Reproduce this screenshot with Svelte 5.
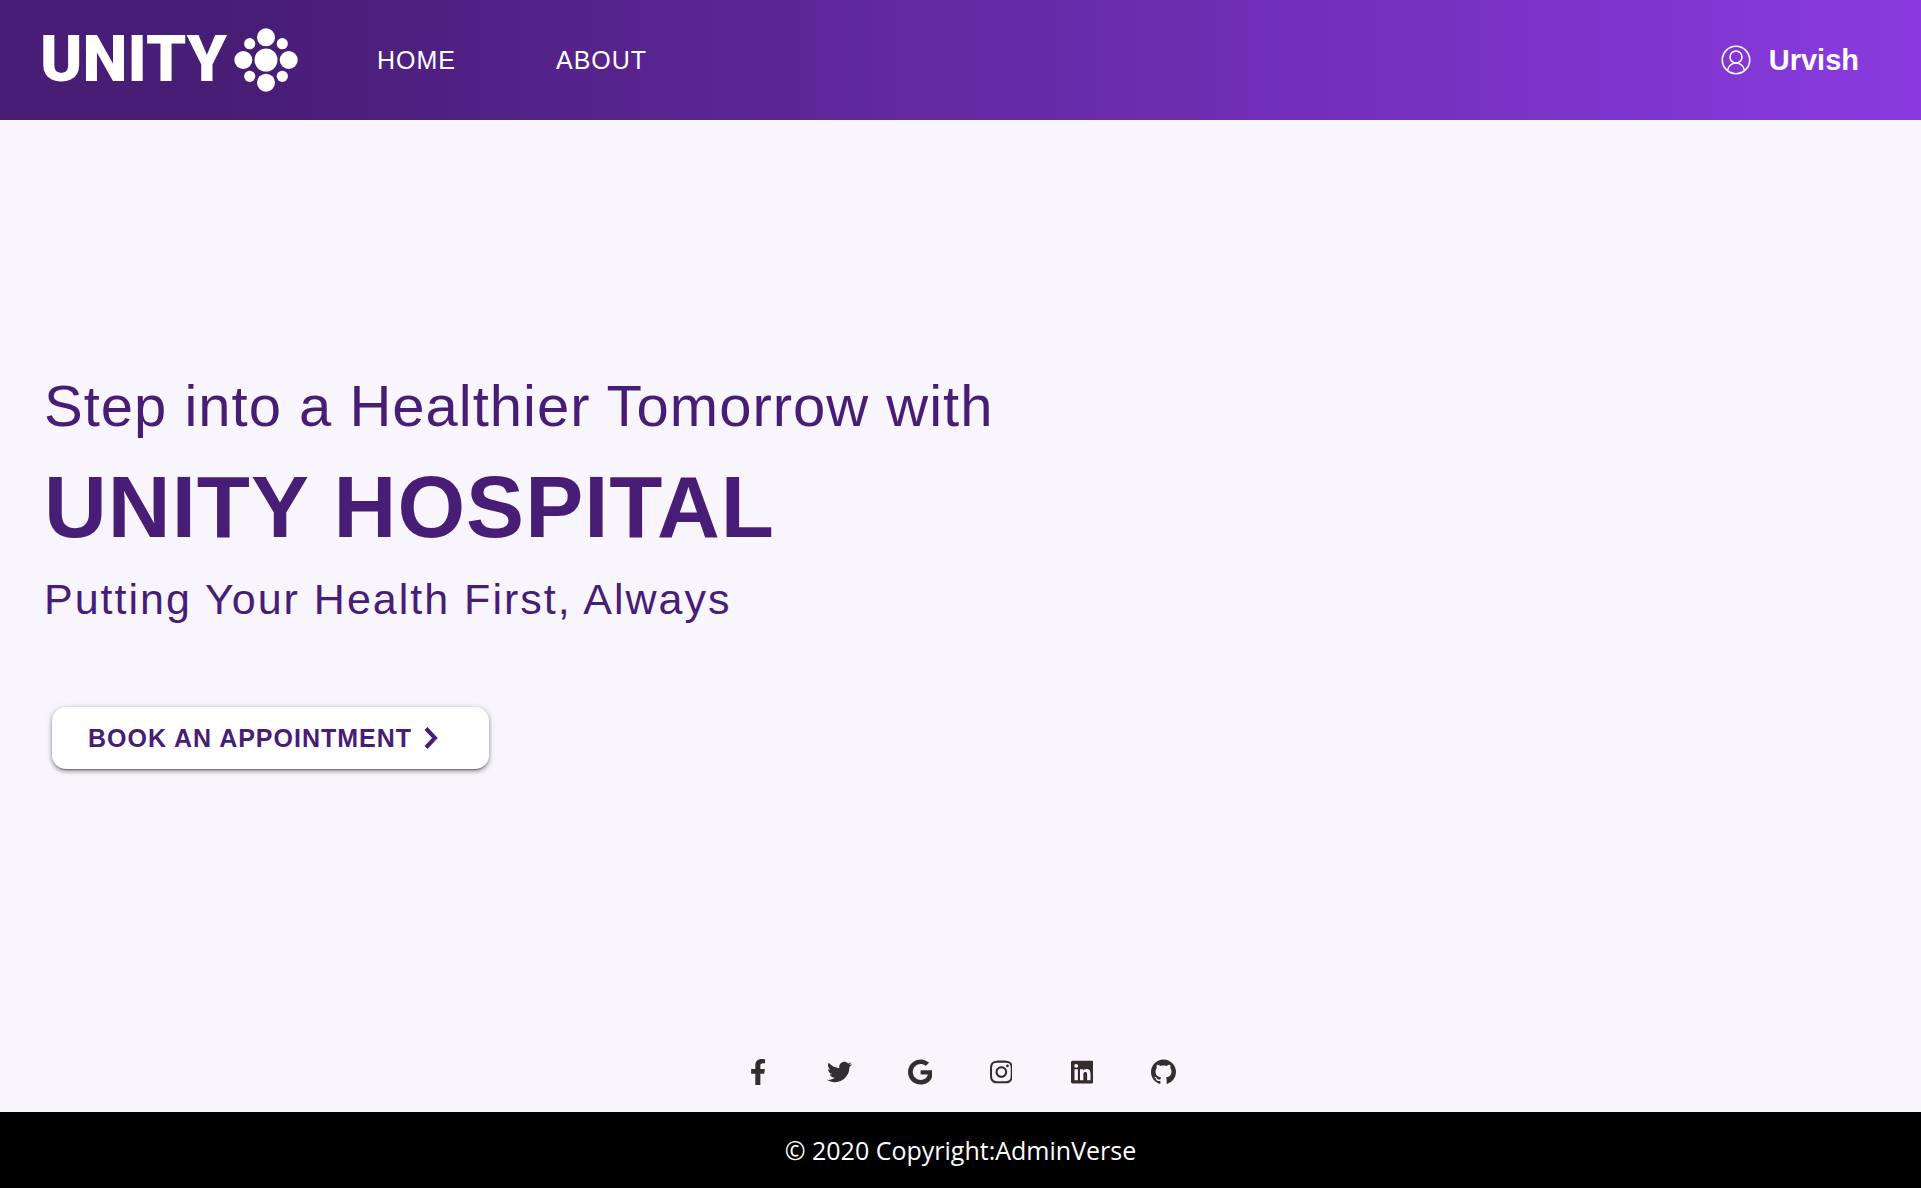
<script>
  const links = [
    { label: 'HOME', href: '#home' },
    { label: 'ABOUT', href: '#about' }
  ];

  const socials = [
    {
      name: 'Facebook',
      box: '0 0 320 512',
      path: 'M279.14 288l14.22-92.66h-88.91v-60.13c0-25.35 12.42-50.06 52.24-50.06h40.42V6.26S260.43 0 225.36 0c-73.22 0-121.08 44.38-121.08 124.72v70.62H22.89V288h81.39v224h100.17V288z'
    },
    {
      name: 'Twitter',
      box: '0 0 512 512',
      path: 'M459.37 151.716c.325 4.548.325 9.097.325 13.645 0 138.72-105.583 298.558-298.558 298.558-59.452 0-114.68-17.219-161.137-47.106 8.447.974 16.568 1.299 25.34 1.299 49.055 0 94.213-16.568 130.274-44.832-46.132-.975-84.792-31.188-98.112-72.772 6.498.974 12.995 1.624 19.818 1.624 9.421 0 18.843-1.3 27.614-3.573-48.081-9.747-84.143-51.98-84.143-102.985v-1.299c13.969 7.797 30.214 12.67 47.431 13.319-28.264-18.843-46.781-51.005-46.781-87.391 0-19.492 5.197-37.36 14.294-52.954 51.655 63.675 129.3 105.258 216.365 109.807-1.624-7.797-2.599-15.918-2.599-24.04 0-57.828 46.782-104.934 104.934-104.934 30.213 0 57.502 12.67 76.67 33.137 23.715-4.548 46.456-13.32 66.599-25.34-7.798 24.366-24.366 44.833-46.132 57.827 21.117-2.273 41.584-8.122 60.426-16.243-14.292 20.791-32.161 39.308-52.628 54.253z'
    },
    {
      name: 'Google',
      box: '0 0 488 512',
      path: 'M488 261.8C488 403.3 391.1 504 248 504 110.8 504 0 393.2 0 256S110.8 8 248 8c66.8 0 123 24.5 166.3 64.9l-67.5 64.9C258.5 52.6 94.3 116.6 94.3 256c0 86.5 69.1 156.6 153.7 156.6 98.2 0 135-70.4 140.8-106.9H248v-85.3h236.1c2.3 12.7 3.9 24.9 3.9 41.4z'
    },
    {
      name: 'Instagram',
      box: '0 0 448 512',
      path: 'M224.1 141c-63.6 0-114.9 51.3-114.9 114.9s51.3 114.9 114.9 114.9S339 319.5 339 255.9 287.7 141 224.1 141zm0 189.6c-41.1 0-74.7-33.5-74.7-74.7s33.5-74.7 74.7-74.7 74.7 33.5 74.7 74.7-33.6 74.7-74.7 74.7zm146.4-194.3c0 14.9-12 26.8-26.8 26.8-14.9 0-26.8-12-26.8-26.8s12-26.8 26.8-26.8 26.8 12 26.8 26.8zm76.1 27.2c-1.7-35.9-9.9-67.7-36.2-93.9-26.2-26.2-58-34.4-93.9-36.2-37-2.1-147.9-2.1-184.9 0-35.8 1.7-67.6 9.9-93.9 36.1s-34.4 58-36.2 93.9c-2.1 37-2.1 147.9 0 184.9 1.7 35.9 9.9 67.7 36.2 93.9s58 34.4 93.9 36.2c37 2.1 147.9 2.1 184.9 0 35.9-1.7 67.7-9.9 93.9-36.2 26.2-26.2 34.4-58 36.2-93.9 2.1-37 2.1-147.8 0-184.8zM398.8 388c-7.8 19.6-22.9 34.7-42.6 42.6-29.5 11.7-99.5 9-132.1 9s-102.7 2.6-132.1-9c-19.6-7.8-34.7-22.9-42.6-42.6-11.7-29.5-9-99.5-9-132.1s-2.6-102.7 9-132.1c7.8-19.6 22.9-34.7 42.6-42.6 29.5-11.7 99.5-9 132.1-9s102.7-2.6 132.1 9c19.6 7.8 34.7 22.9 42.6 42.6 11.7 29.5 9 99.5 9 132.1s2.7 102.7-9 132.1z'
    },
    {
      name: 'LinkedIn',
      box: '0 0 448 512',
      path: 'M416 32H31.9C14.3 32 0 46.5 0 64.3v383.4C0 465.5 14.3 480 31.9 480H416c17.6 0 32-14.5 32-32.3V64.3c0-17.8-14.4-32.3-32-32.3zM135.4 416H69V202.2h66.5V416zm-33.2-243c-21.3 0-38.5-17.3-38.5-38.5S80.9 96 102.2 96c21.2 0 38.5 17.3 38.5 38.5 0 21.3-17.2 38.5-38.5 38.5zm282.1 243h-66.4V312c0-24.8-.5-56.7-34.5-56.7-34.6 0-39.9 27-39.9 54.9V416h-66.4V202.2h63.7v29.2h.9c8.9-16.8 30.6-34.5 62.9-34.5 67.2 0 79.7 44.3 79.7 101.9V416z'
    },
    {
      name: 'GitHub',
      box: '0 0 16 16',
      path: 'M8 0C3.58 0 0 3.58 0 8c0 3.54 2.29 6.53 5.47 7.59.4.07.55-.17.55-.38 0-.19-.01-.82-.01-1.49-2.01.37-2.53-.49-2.69-.94-.09-.23-.48-.94-.82-1.13-.28-.15-.68-.52-.01-.53.63-.01 1.08.58 1.23.82.72 1.21 1.87.87 2.33.66.07-.52.28-.87.51-1.07-1.78-.2-3.64-.89-3.64-3.95 0-.87.31-1.59.82-2.15-.08-.2-.36-1.02.08-2.12 0 0 .67-.21 2.2.82.64-.18 1.32-.27 2-.27s1.36.09 2 .27c1.53-1.04 2.2-.82 2.2-.82.44 1.1.16 1.92.08 2.12.51.56.82 1.27.82 2.15 0 3.07-1.87 3.75-3.65 3.95.29.25.54.73.54 1.48 0 1.07-.01 1.93-.01 2.2 0 .21.15.46.55.38A8.01 8.01 0 0 0 16 8c0-4.42-3.58-8-8-8z'
    }
  ];
</script>

<div class="page">
  <header>
    <a class="brand" href="#home">
      <span>UNITY</span>
      <svg viewBox="-32 -32 64 64" aria-hidden="true">
        <circle r="11.5" />
        <circle cy="-22.7" r="9" />
        <circle cy="22.7" r="9" />
        <circle cx="-22.7" r="9" />
        <circle cx="22.7" r="9" />
        <circle cx="-16.3" cy="-16.3" r="5.6" />
        <circle cx="16.3" cy="-16.3" r="5.6" />
        <circle cx="-16.3" cy="16.3" r="5.6" />
        <circle cx="16.3" cy="16.3" r="5.6" />
      </svg>
    </a>
    <nav>
      {#each links as link}
        <a href={link.href}>{link.label}</a>
      {/each}
    </nav>
    <button class="user" type="button">
      <svg viewBox="0 0 30 30" aria-hidden="true">
        <circle cx="15" cy="15" r="13.7" />
        <circle cx="15" cy="12" r="6" />
        <path d="M6.6 25.4C7.4 21 10.8 18 15 18s7.600 3 8.400 7.400" />
      </svg>
      <span>Urvish</span>
    </button>
  </header>

  <main>
    <h2>Step into a Healthier Tomorrow with</h2>
    <h1>UNITY HOSPITAL</h1>
    <p>Putting Your Health First, Always</p>
    <button class="book" type="button">
      BOOK AN APPOINTMENT
      <svg viewBox="0 0 14 22" aria-hidden="true"><path d="M2 1.500L11 11 2 20.500" /></svg>
    </button>
  </main>

  <footer>
    <div class="social">
      {#each socials as s}
        <a href="#{s.name.toLowerCase()}" aria-label={s.name}>
          <svg viewBox={s.box} aria-hidden="true"><path d={s.path} /></svg>
        </a>
      {/each}
    </div>
    <div class="copy">© 2020 Copyright:<a href="#adminverse">AdminVerse</a></div>
  </footer>
</div>

<style>
  .page {
    min-height: 100vh;
    display: flex;
    flex-direction: column;
    background: #f8f5fd;
    color: #471d75;
    font-family: 'Liberation Sans', Arial, sans-serif;
  }
  a {
    color: inherit;
    text-decoration: none;
  }
  button {
    border: 0;
    font-family: inherit;
    cursor: pointer;
  }
  header {
    display: flex;
    align-items: center;
    height: 120px;
    padding: 0 62px 0 40px;
    box-sizing: border-box;
    color: #fff;
    background: linear-gradient(90deg, #471d75 12%, #8a3ae0);
  }
  .brand {
    display: flex;
    align-items: center;
    gap: 7px;
    font: 900 64px/76px Roboto, sans-serif;
  }
  .brand svg {
    width: 64px;
    height: 64px;
    fill: #fff;
  }
  nav {
    display: flex;
    gap: 100px;
    margin-left: 79px;
    font-size: 25px;
    letter-spacing: 1px;
  }
  .user {
    display: flex;
    align-items: center;
    gap: 18px;
    margin-left: auto;
    padding: 0;
    background: none;
    color: #fff;
    font-size: 29px;
    font-weight: 700;
  }
  .user svg {
    width: 30px;
    height: 30px;
    fill: none;
    stroke: #fff;
    stroke-width: 1.6;
  }
  main {
    flex: 1;
    display: flex;
    flex-direction: column;
    align-items: flex-start;
    justify-content: center;
    padding: 0 44px;
  }
  h1,
  h2,
  p {
    margin: 0 0 14px;
  }
  h2 {
    font-size: 58px;
    line-height: 70px;
    font-weight: 400;
    letter-spacing: 1px;
  }
  h1 {
    font-size: 87px;
    line-height: 104px;
    font-weight: 700;
    letter-spacing: 1px;
  }
  p {
    font-size: 43px;
    line-height: 52px;
    letter-spacing: 2px;
  }
  .book {
    display: flex;
    align-items: center;
    gap: 12px;
    height: 62px;
    margin: 68px 8px 0;
    padding: 0 51px 0 36px;
    border-radius: 14px;
    background: #fff;
    color: #471d75;
    font-size: 25px;
    font-weight: 700;
    letter-spacing: 1px;
    box-shadow:
      0 3px 1px -2px rgba(0, 0, 0, 0.3),
      0 2px 4px rgba(0, 0, 0, 0.4),
      0 1px 8px rgba(0, 0, 0, 0.1);
  }
  .book svg {
    width: 14px;
    height: 22px;
    fill: none;
    stroke: #471d75;
    stroke-width: 4;
  }
  .social {
    display: flex;
    justify-content: center;
    padding: 39px 0 27px;
  }
  .social a {
    display: flex;
    justify-content: center;
    width: 81px;
  }
  .social svg {
    height: 26px;
    max-width: 25px;
    fill: #332d2d;
  }
  .copy {
    padding: 20px;
    background: #000;
    color: #fff;
    font: 25px/36px 'Open Sans', sans-serif;
    text-align: center;
  }
</style>
